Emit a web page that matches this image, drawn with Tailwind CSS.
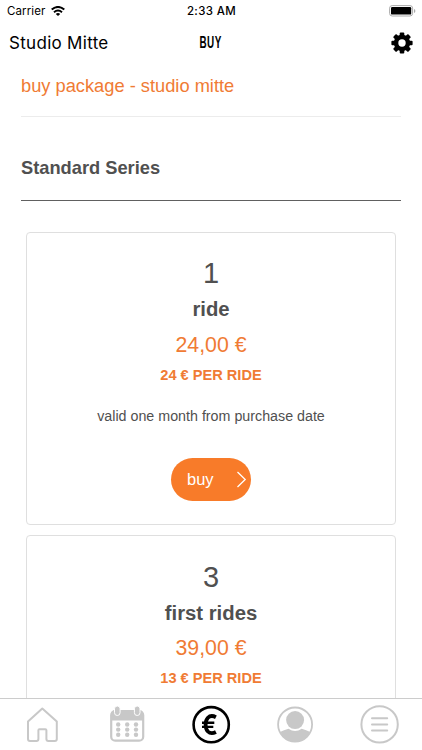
<!DOCTYPE html>
<html lang="en">
<head>
<meta charset="utf-8">
<title>Buy package</title>
<script src="https://cdn.jsdelivr.net/npm/@tailwindcss/browser@4"></script>
</head>
<body class="bg-white">
<div class="w-[422px] h-[750px] flex flex-col overflow-hidden bg-white font-['Liberation_Sans',sans-serif] text-[#505050]">
  <header class="shrink-0 font-[Inter,sans-serif] text-black">
    <div class="h-[22px] grid grid-cols-3 items-center pl-[7px] pr-[6px] text-[11.5px] leading-[22px]">
      <div class="flex items-center gap-[6px]">
        <span class="tracking-[0.1px]">Carrier</span>
        <svg class="w-[14px] h-[10px]" viewBox="0 0 14 10" fill="none" stroke="#000" stroke-width="2"><path d="M.7 3.6Q7-1.7 13.3 3.6M3 6.2q4-3.4 8 0"/><path d="M7 10 4.8 7.9q2.2-1.8 4.4 0z" fill="#000" stroke="none"/></svg>
      </div>
      <span class="text-center font-medium tracking-[0.35px]">2:33 AM</span>
      <svg class="justify-self-end w-[27px] h-[12px]" viewBox="0 0 27 12"><rect x=".6" y=".6" width="23" height="10.4" rx="2.6" fill="none" stroke="#aaa"/><rect x="2" y="2" width="20.2" height="7.6" rx="1.2"/><path d="M25 4v4q1.4-.5 1.4-2T25 4" fill="#aaa"/></svg>
    </div>
    <div class="h-[42px] grid grid-cols-3 items-center pl-[9px] pr-[9px]">
      <span class="text-[17px] leading-[42px] tracking-[0.3px] whitespace-nowrap">Studio Mitte</span>
      <span class="justify-self-center font-['Liberation_Sans',sans-serif] font-bold text-[16.5px] leading-none scale-x-[0.6] scale-y-[1.04] tracking-[0.8px] -translate-y-px">BUY</span>
      <svg class="justify-self-end w-[22px] h-[22px]" viewBox="-11 -11 22 22"><rect x="-2.3" y="-10.6" width="4.6" height="21.2" rx="1"/><rect x="-2.3" y="-10.6" width="4.6" height="21.2" rx="1" transform="rotate(45)"/><rect x="-2.3" y="-10.6" width="4.6" height="21.2" rx="1" transform="rotate(90)"/><rect x="-2.3" y="-10.6" width="4.6" height="21.2" rx="1" transform="rotate(135)"/><circle r="8.2"/><circle r="3.7" fill="#fff"/></svg>
    </div>
  </header>

  <main class="flex-1 min-h-0 overflow-hidden px-[21px]">
    <h1 class="h-[53px] pt-[11px] border-b border-[#ececec] text-[18.27px] leading-[22px] text-[#f07b34]">buy package - studio mitte</h1>
    <h2 class="h-[84px] pt-[40px] border-b border-[#606060] text-[18.27px] leading-[22px] font-bold">Standard Series</h2>
    <div class="pt-[31px] px-[5px] flex flex-col gap-[10px] text-center">
      <section class="h-[293px] border border-[#dfdfdf] rounded-[4px] flex flex-col items-center pt-[24px]">
        <div class="text-[29px] leading-[32px]">1</div>
        <div class="mt-[8px] text-[20.3px] leading-[24px] font-bold">ride</div>
        <div class="mt-[12px] text-[21.3px] leading-[24px] text-[#f07b34]">24,00 €</div>
        <div class="mt-[9px] text-[14.6px] leading-[18px] font-bold text-[#f07b34]">24 € PER RIDE</div>
        <div class="mt-[22px] text-[14.27px] leading-[20px]">valid one month from purchase date</div>
        <button class="mt-[32px] w-[80px] h-[43px] shrink-0 rounded-full bg-[#f87b29] text-white flex items-center justify-between pl-[16px] pr-[4px] text-[16.5px]">
          <span>buy</span>
          <svg class="w-[11px] h-[17px]" viewBox="0 0 11 17" fill="none" stroke="#fff" stroke-width="1.3"><path d="m1.5 1 7.7 7.5-7.7 7.5"/></svg>
        </button>
      </section>
      <section class="h-[293px] border border-[#dfdfdf] rounded-[4px] flex flex-col items-center pt-[25px]">
        <div class="text-[29px] leading-[32px]">3</div>
        <div class="mt-[8px] text-[20.3px] leading-[24px] font-bold">first rides</div>
        <div class="mt-[11px] text-[21.3px] leading-[24px] text-[#f07b34]">39,00 €</div>
        <div class="mt-[9px] text-[14.6px] leading-[18px] font-bold text-[#f07b34]">13 € PER RIDE</div>
      </section>
    </div>
  </main>

  <nav class="h-[52px] shrink-0 border-t border-[#ccc] bg-white grid grid-cols-5 justify-items-center items-center">
    <svg class="w-[40px] h-[40px]" viewBox="0 0 40 40" fill="none" stroke="#c8c8c8" stroke-width="2" stroke-linejoin="round"><path d="M20.300 3.500 6 16.500V34q0 2 2 2h6.400q2 0 2-2V25.300q0-1 1-1h6q1 0 1 1V34q0 2 2 2h6.400q2 0 2-2V16.500z"/></svg>
    <svg class="w-[40px] h-[40px]" viewBox="0 0 40 40"><rect x="4.200" y="6.200" width="32" height="29.500" rx="4" fill="#fff" stroke="#c8c8c8" stroke-width="2.200"/><path d="M4 15.500v-6q0-4 4-4h24q4 0 4 4v6z" fill="#c8c8c8"/><g fill="#c8c8c8" stroke="#fff" stroke-width="1"><rect x="7.500" y="1" width="5.600" height="9.500" rx="2.800"/><rect x="27.400" y="1" width="5.600" height="9.500" rx="2.800"/></g><g fill="#c8c8c8"><circle cx="11.200" cy="19.500" r="2.200"/><circle cx="20.200" cy="19.500" r="2.200"/><circle cx="29" cy="19.500" r="2.200"/><circle cx="11.200" cy="24.600" r="2.200"/><circle cx="20.200" cy="24.600" r="2.200"/><circle cx="29" cy="24.600" r="2.200"/><circle cx="11.200" cy="29.700" r="2.200"/><circle cx="20.200" cy="29.700" r="2.200"/><circle cx="29" cy="29.700" r="2.200"/></g></svg>
    <svg class="w-[40px] h-[40px]" viewBox="0 0 40 40" fill="none" stroke="#000"><circle cx="20.200" cy="19.700" r="17.600" stroke-width="2.600"/><path d="M24.900 12.200q-4.900-2.600-8 .6-2.300 2.500-2.300 6.900t2.300 6.800q3.100 3 8 .5" stroke-width="3.800"/><path d="M11 17.700h12.300M11 21.900h11.300" stroke-width="2.400"/></svg>
    <svg class="w-[40px] h-[40px]" viewBox="0 0 40 40"><circle cx="20.100" cy="19.500" r="17" fill="#fff" stroke="#c8c8c8" stroke-width="1.800"/><circle cx="20.100" cy="15.100" r="9" fill="#c8c8c8"/><path d="M5 27q3.800-1.800 8.500-3.300q6.600 4.400 13.200 0q4.700 1.500 8.500 3.300Q29.500 36.800 20.100 36.800T5 27" fill="#c8c8c8"/></svg>
    <svg class="w-[40px] h-[40px]" viewBox="0 0 40 40" fill="none" stroke="#c8c8c8" stroke-width="2" stroke-linecap="round"><circle cx="19.600" cy="19.400" r="18.200"/><path d="M12 13.300h15.200M12 19.400h15.200M12 25.400h15.200"/></svg>
  </nav>
</div>
</body>
</html>
